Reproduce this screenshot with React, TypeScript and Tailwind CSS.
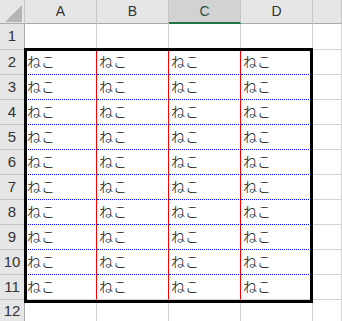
import React from 'react'

const COLS = ['A', 'B', 'C', 'D', '']
const ROWS = Array.from({ length: 12 }, (_, i) => i + 1)

function Corner() {
  return (
    <div className="relative h-full border-r border-b border-r-[#c6c6c6] border-b-[#ababab] bg-[#e6e6e6]">
      <svg className="absolute left-[5px] top-[5px]" width="17" height="17" viewBox="0 0 17 17">
        <polygon points="17,0 17,17 0,17" fill="#b5b5b5" />
      </svg>
    </div>
  )
}

function ColHeader({ label }: { label: string }) {
  const selected = label === 'C'
  return (
    <div
      className={[
        'flex h-full items-center justify-center border-r border-r-[#c6c6c6] text-[14px]',
        selected
          ? 'border-b-2 border-b-[#217346] bg-[#d2d2d2] pt-[1px] text-[#245744]'
          : 'border-b border-b-[#ababab] bg-[#e6e6e6] text-[#333]',
      ].join(' ')}
    >
      {label}
    </div>
  )
}

function Cell({ row, col }: { row: number; col: number }) {
  const inRange = row >= 2 && row <= 11 && col < 4
  const right = inRange && col < 3 ? 'border-r-[#ff0000]' : 'border-r-[#d4d4d4]'
  const bottom =
    inRange && row < 11 ? '[border-bottom-style:dotted] border-b-[#0000ff]' : 'border-b-[#d4d4d4]'
  return (
    <div
      className={`flex h-full items-end overflow-hidden border-r border-b bg-white pb-[3px] pl-[2px] text-[14px] font-light leading-[18px] text-black ${right} ${bottom}`}
    >
      {inRange ? 'ねこ' : ''}
    </div>
  )
}

export default function App() {
  return (
    <div
      className="relative h-[321px] w-[342px] overflow-hidden bg-white"
      style={{ fontFamily: '"Liberation Sans", "Noto Sans CJK JP", sans-serif' }}
    >
      <div className="grid grid-cols-[25px_72px_72px_72px_72px_1fr] grid-rows-[24px_26px_repeat(10,25px)_1fr] h-full">
        <Corner />
        {COLS.map((c, i) => (
          <ColHeader key={i} label={c} />
        ))}
        {ROWS.map((r) => (
          <React.Fragment key={r}>
            <div className="flex h-full items-center justify-center border-r border-b border-r-[#ababab] border-b-[#c6c6c6] bg-[#e6e6e6] text-[15px] text-[#333]">
              {r}
            </div>
            {COLS.map((_, ci) => (
              <Cell key={ci} row={r} col={ci} />
            ))}
          </React.Fragment>
        ))}
      </div>
      {/* 太枠 A2:D11 */}
      <div className="pointer-events-none absolute left-[24px] top-[48px] h-[255px] w-[289px] border-[3px] border-black" />
    </div>
  )
}
